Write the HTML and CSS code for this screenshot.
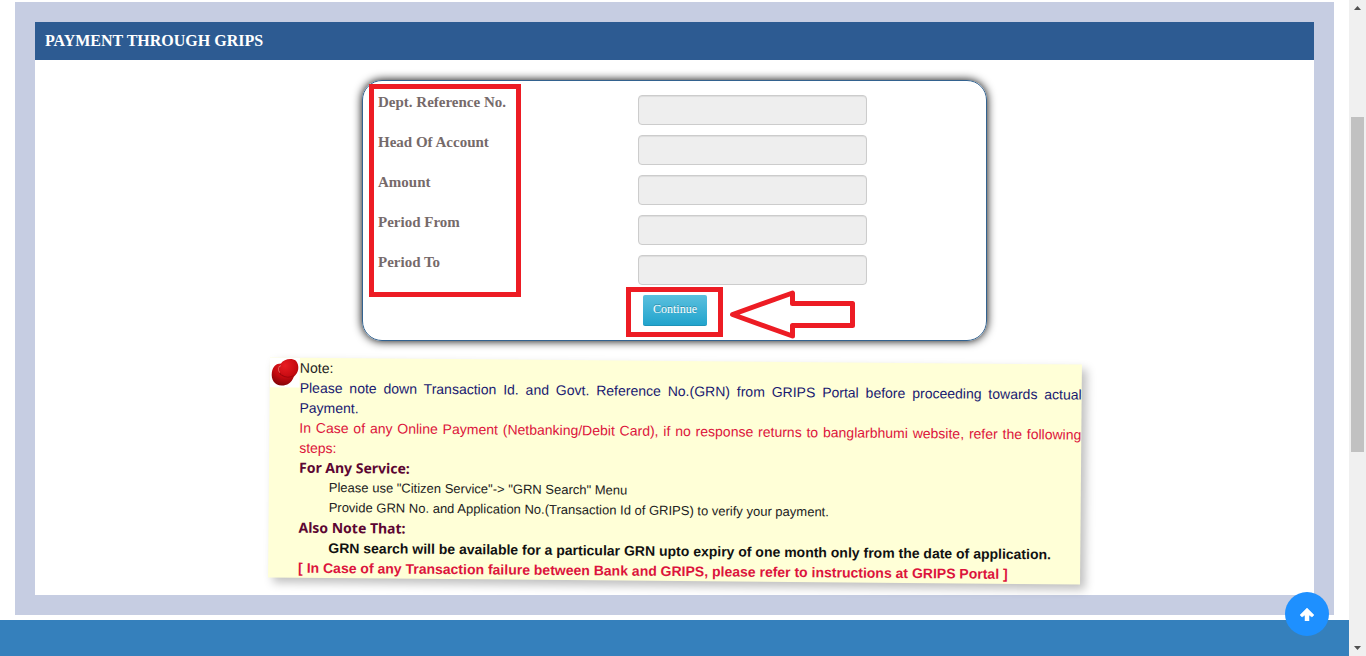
FILE: index.html
```html
<!DOCTYPE html>
<html lang="en">
  <head>
    <meta charset="UTF-8" />
    <meta name="viewport" content="width=device-width, initial-scale=1.0" />
    <title>Payment Through GRIPS</title>
    <link rel="stylesheet" href="styles.css">
  </head>
  <body>
    <div class="page">
      <main class="panel">
        <h1 class="panel-title">PAYMENT THROUGH GRIPS</h1>

        <form class="payment-form">
          <div class="form-row">
            <label for="deptRef">Dept. Reference No.</label>
            <input type="text" id="deptRef" readonly />
          </div>
          <div class="form-row">
            <label for="headAccount">Head Of Account</label>
            <input type="text" id="headAccount" readonly />
          </div>
          <div class="form-row">
            <label for="amount">Amount</label>
            <input type="text" id="amount" readonly />
          </div>
          <div class="form-row">
            <label for="periodFrom">Period From</label>
            <input type="text" id="periodFrom" readonly />
          </div>
          <div class="form-row">
            <label for="periodTo">Period To</label>
            <input type="text" id="periodTo" readonly />
          </div>
          <div class="form-actions">
            <button type="button">Continue</button>
          </div>

          <div class="mark mark-labels"></div>
          <div class="mark mark-button"></div>
          <svg class="mark-arrow" width="126" height="50" viewBox="0 0 126 50" aria-hidden="true">
            <path d="M2.5 24.5 L62.5 3 V13.5 H122.5 V35.5 H62.5 V46 Z" fill="none" stroke="#ed1c24" stroke-width="5" stroke-linejoin="round" />
          </svg>
        </form>

        <section class="note">
          <svg class="pin" width="30" height="30" viewBox="0 0 30 30" aria-hidden="true">
            <defs>
              <radialGradient id="pinHead" cx="0.5" cy="0.25" r="0.8">
                <stop offset="0" stop-color="#e81c22" />
                <stop offset="0.55" stop-color="#c60a11" />
                <stop offset="1" stop-color="#7c0207" />
              </radialGradient>
            </defs>
            <rect width="30" height="30" fill="#fff" />
            <path d="M11 6 C14 1 22 0 26 3 C30 8 29 15 24 19 C22 25 17 28 12 28 C5 28 1 22 2 15 C3 9 6 6 11 6 Z" fill="url(#pinHead)" />
            <path d="M11 7 C8 10 8 14 11 17 C15 20 20 20 24 18" fill="none" stroke="#a0060c" stroke-width="1" />
            <path d="M11 8 C8 9 8 13 10 15" fill="none" stroke="#e8605c" stroke-width="1" />
          </svg>
          <p class="note-title">Note:</p>
          <p class="note-info">Please note down Transaction Id. and Govt. Reference No.(GRN) from GRIPS Portal before proceeding towards actual Payment.</p>
          <p class="note-warning">In Case of any Online Payment (Netbanking/Debit Card), if no response returns to banglarbhumi website, refer the following steps:</p>
          <h2>For Any Service:</h2>
          <p class="note-step">Please use "Citizen Service"-&gt; "GRN Search" Menu</p>
          <p class="note-step">Provide GRN No. and Application No.(Transaction Id of GRIPS) to verify your payment.</p>
          <h2>Also Note That:</h2>
          <p class="note-strong">GRN search will be available for a particular GRN upto expiry of one month only from the date of application.</p>
          <p class="note-failure">[ In Case of any Transaction failure between Bank and GRIPS, please refer to instructions at GRIPS Portal ]</p>
        </section>
      </main>
      <footer></footer>
    </div>

    <div class="scrollbar" aria-hidden="true">
      <svg width="7" height="4" viewBox="0 0 7 4"><path d="M0 4 L3.5 0 L7 4 Z" fill="#505050" /></svg>
      <div class="scroll-thumb"></div>
      <svg width="7" height="4" viewBox="0 0 7 4"><path d="M0 0 L3.5 4 L7 0 Z" fill="#505050" /></svg>
    </div>

    <a class="to-top" href="#" aria-label="Back to top">
      <svg width="14" height="14" viewBox="0 0 14 14"><path d="M7 1 L14 8 L12 10 L9 8 V14 H5 V8 L2 10 L0 8 Z" fill="#fff" stroke="#fff" stroke-width="0.5" stroke-linejoin="round" /></svg>
    </a>
  </body>
</html>
```

FILE: styles.css
```css
:root {
  --frame: #c6cde2;
  --title-bg: #2d5b92;
  --footer-bg: #3580bc;
  --mark: #ed1c24;
  --note-bg: #ffffd7;
}

* {
  margin: 0;
  padding: 0;
  box-sizing: border-box;
}

body {
  display: flex;
  min-height: 100vh;
  overflow: hidden;
  background: #fff;
  font-family: "Liberation Serif", "Times New Roman", serif;
  font-size: 14px;
  line-height: 20px;
}

.page {
  flex: 1;
  display: flex;
  flex-direction: column;
  padding-top: 2px;
}

.panel {
  margin: 0 15px 5px;
  padding-bottom: 14px;
  border: 20px solid var(--frame);
}

.panel-title {
  padding: 9px 10px;
  background: var(--title-bg);
  color: #fff;
  font-size: 16px;
  line-height: 20px;
}

.payment-form {
  position: relative;
  width: 100%;
  max-width: 625px;
  margin: 20px auto;
  padding: 14px 15px;
  border: 1px solid #33628f;
  border-radius: 20px;
  box-shadow: 0 0 10px #000;
}

.form-row {
  display: grid;
  grid-template-columns: 260px 1fr;
  align-items: start;
  margin-bottom: 10px;
}

.form-row label {
  color: #766a6a;
  font-size: 15px;
  font-weight: bold;
  line-height: 14px;
}

.form-row input {
  width: 229px;
  height: 30px;
  padding: 4px 6px;
  background: #eee;
  border: 1px solid #ccc;
  border-radius: 4px;
  box-shadow: inset 0 1px 1px rgba(0, 0, 0, 0.075);
}

.form-actions {
  padding-left: 265px;
}

.form-actions button {
  display: block;
  height: 31px;
  padding: 0 10px 2px;
  background: linear-gradient(#5bc0de, #22a4cd);
  border: none;
  border-bottom: 1px solid #1e93b8;
  border-radius: 2px;
  color: #fff;
  font-family: inherit;
  font-size: 12px;
  text-shadow: 0 -1px 0 rgba(0, 0, 0, 0.25);
  cursor: pointer;
}

/* red callouts over the form */
.mark {
  position: absolute;
  border: 5px solid var(--mark);
  pointer-events: none;
}

.mark-labels {
  top: 3px;
  left: 6px;
  width: 152px;
  height: 213px;
}

.mark-button {
  top: 206px;
  left: 263px;
  width: 97px;
  height: 50px;
}

.mark-arrow {
  position: absolute;
  top: 209px;
  left: 367px;
}

.note {
  position: relative;
  width: 100%;
  max-width: 812px;
  margin: 0 auto;
  padding-left: 30px;
  background: var(--note-bg);
  box-shadow: 5px 5px 10px rgba(0, 0, 0, 0.25);
  color: #222;
  font-family: "Liberation Sans", Arial, sans-serif;
  text-align: justify;
  transform: rotate(0.5deg);
}

.pin {
  position: absolute;
  top: 0;
  left: 0;
}

.note h2 {
  color: #5c0632;
  font-family: "Comic Sans MS", "Noto Sans", sans-serif;
  font-size: 14px;
  line-height: 20px;
}

.note-info {
  color: #191970;
}

.note-warning {
  color: #dc143c;
}

.note-step {
  padding-left: 30px;
  font-size: 13px;
}

.note-strong {
  padding-left: 30px;
  color: #111;
  font-weight: bold;
}

.note-failure {
  color: #dc143c;
  font-weight: bold;
}

footer {
  flex: 1;
  min-height: 36px;
  background: var(--footer-bg);
}

.scrollbar {
  display: flex;
  flex-direction: column;
  align-items: center;
  width: 17px;
  padding: 6px 2px;
  background: #f0f0f0;
}

.scroll-thumb {
  width: 13px;
  height: 51vh;
  margin: 107px 0 auto;
  background: #c1c1c1;
}

.to-top {
  position: fixed;
  right: 37px;
  bottom: 20px;
  display: flex;
  align-items: center;
  justify-content: center;
  width: 44px;
  height: 44px;
  background: #1e90ff;
  border-radius: 50%;
}
```
